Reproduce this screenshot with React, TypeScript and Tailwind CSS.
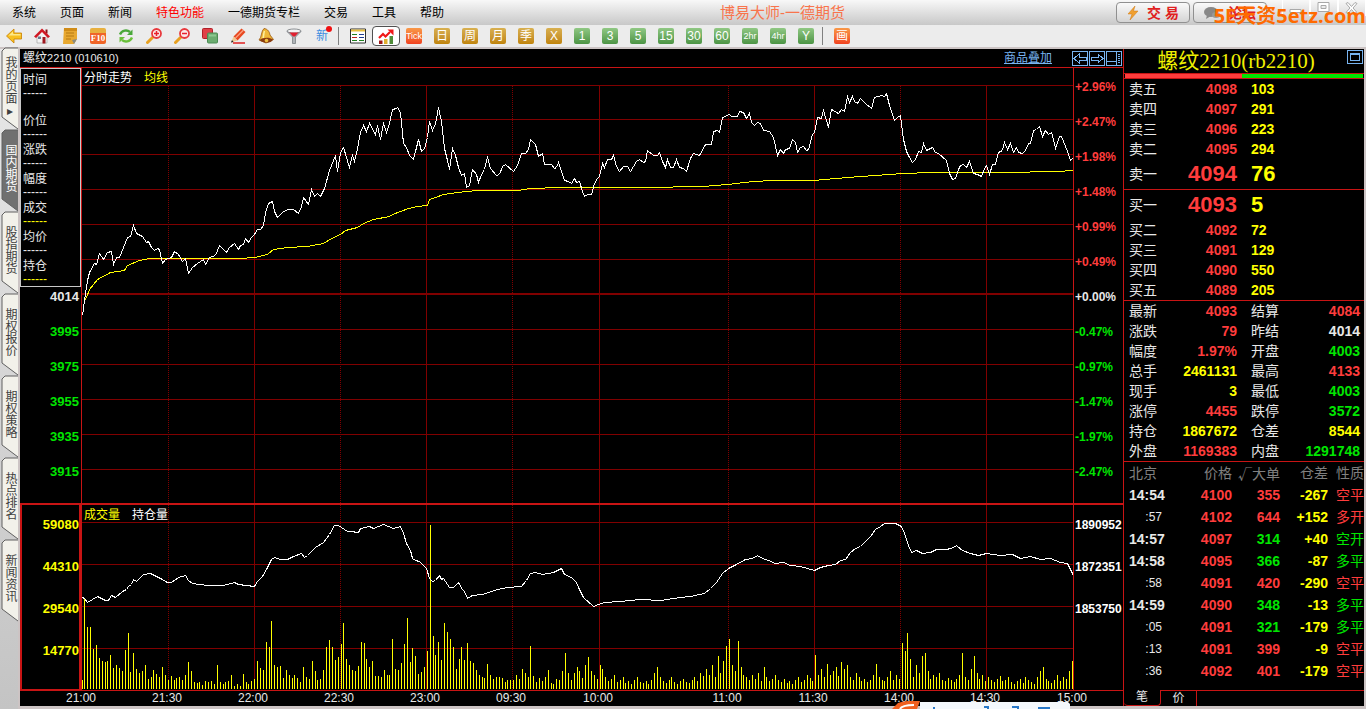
import type { ReactNode } from "react";
import clsx from "clsx";

type Tone = "red" | "green" | "yellow" | "white";

const TONE: Record<Tone, string> = {
  red: "text-[#ff3c3c]",
  green: "text-[#00e600]",
  yellow: "text-[#ffff00]",
  white: "text-[#e8e8e8]",
};

const MENUS = ["系统", "页面", "新闻", "特色功能", "一德期货专栏", "交易", "工具", "帮助"];

const SIDE_TABS = ["我的页面▸", "国内期货", "股指期货", "期权报价", "期权策略", "热点排名", "新闻资讯"];

const PERIODS: { label: string; kind: "gold" | "green" | "orange" }[] = [
  { label: "Tick", kind: "orange" },
  { label: "日", kind: "gold" },
  { label: "周", kind: "gold" },
  { label: "月", kind: "gold" },
  { label: "季", kind: "gold" },
  { label: "X", kind: "gold" },
  { label: "1", kind: "green" },
  { label: "3", kind: "green" },
  { label: "5", kind: "green" },
  { label: "15", kind: "green" },
  { label: "30", kind: "green" },
  { label: "60", kind: "green" },
  { label: "2hr", kind: "green" },
  { label: "4hr", kind: "green" },
  { label: "Y", kind: "green" },
];

const INFO: { label: string; tone: Tone }[] = [
  { label: "价位", tone: "white" },
  { label: "涨跌", tone: "white" },
  { label: "幅度", tone: "white" },
  { label: "成交", tone: "yellow" },
  { label: "均价", tone: "white" },
  { label: "持仓", tone: "yellow" },
];

const PERCENTS: [string, Tone][] = [
  ["+2.96%", "red"],
  ["+2.47%", "red"],
  ["+1.98%", "red"],
  ["+1.48%", "red"],
  ["+0.99%", "red"],
  ["+0.49%", "red"],
  ["+0.00%", "white"],
  ["-0.47%", "green"],
  ["-0.97%", "green"],
  ["-1.47%", "green"],
  ["-1.97%", "green"],
  ["-2.47%", "green"],
];

const SELLS = [
  ["卖五", "4098", "103"],
  ["卖四", "4097", "291"],
  ["卖三", "4096", "223"],
  ["卖二", "4095", "294"],
  ["卖一", "4094", "76"],
];

const BUYS = [
  ["买一", "4093", "5"],
  ["买二", "4092", "72"],
  ["买三", "4091", "129"],
  ["买四", "4090", "550"],
  ["买五", "4089", "205"],
];

const STATS: [string, string, Tone, string, string, Tone][] = [
  ["最新", "4093", "red", "结算", "4084", "red"],
  ["涨跌", "79", "red", "昨结", "4014", "white"],
  ["幅度", "1.97%", "red", "开盘", "4003", "green"],
  ["总手", "2461131", "yellow", "最高", "4133", "red"],
  ["现手", "3", "yellow", "最低", "4003", "green"],
  ["涨停", "4455", "red", "跌停", "3572", "green"],
  ["持仓", "1867672", "yellow", "仓差", "8544", "yellow"],
  ["外盘", "1169383", "red", "内盘", "1291748", "green"],
];

const TRADES: [string, string, string, string, string, Tone][] = [
  ["14:54", "4100", "355", "-267", "空平", "red"],
  [":57", "4102", "644", "+152", "多开", "red"],
  ["14:57", "4097", "314", "+40", "空开", "green"],
  ["14:58", "4095", "366", "-87", "多平", "green"],
  [":58", "4091", "420", "-290", "空平", "red"],
  ["14:59", "4090", "348", "-13", "多平", "green"],
  [":05", "4091", "321", "-179", "多平", "green"],
  [":13", "4091", "399", "-9", "空平", "red"],
  [":36", "4092", "401", "-179", "空平", "red"],
];

// plot units: x runs 82..1073 over the session, y grows downwards
const H_LINES = [85, 119, 154, 189, 224, 259, 329, 364, 399, 434, 469];
const VOL_LINES = [522, 564, 606, 648];
const SOLID = [254, 426, 599, 814, 986];
const DOTTED = [168, 340, 512, 728, 900];

const TIMES = [
  { label: "21:00", x: 82 },
  { label: "21:30", x: 168 },
  { label: "22:00", x: 254 },
  { label: "22:30", x: 340 },
  { label: "23:00", x: 426 },
  { label: "09:30", x: 512 },
  { label: "10:00", x: 599 },
  { label: "11:00", x: 728 },
  { label: "11:30", x: 814 },
  { label: "14:00", x: 900 },
  { label: "14:30", x: 986 },
  { label: "15:00", x: 1073 },
];

const PRICE =
  "82,315 84,300 87,280 89,272 94,263 96,264 99,253 103,259 107,252 111,251 113,264 116,257 119,257 127,237 130,236 133,225 136,233 142,236 146,242 148,241 151,247 154,250 157,248 159,249 162,263 165,259 171,257 174,251 178,254 182,261 185,258 188,273 192,267 197,263 203,259 205,264 209,257 215,255 219,245 226,252 229,247 234,243 238,249 240,245 243,244 245,238 248,242 251,237 254,234 257,229 260,229 263,225 265,212 268,203 272,201 274,211 277,217 282,212 287,209 293,209 298,213 301,206 303,197 308,204 311,189 314,196 317,193 320,196 324,188 329,170 335,155 337,171 340,152 343,147 346,157 349,167 352,155 354,161 357,148 360,132 363,125 366,131 369,123 375,134 377,125 380,139 383,123 386,132 389,123 392,109 396,108 397,107 400,112 403,143 406,147 409,155 413,159 415,151 418,139 421,151 424,148 427,137 429,121 432,130 435,123 437,113 438,107 441,121 444,148 447,160 449,169 452,148 455,155 458,167 461,175 464,173 466,187 469,185 472,169 476,174 478,182 481,174 484,169 487,157 490,168 496,175 499,174 502,166 505,164 513,171 517,165 521,153 525,153 528,149 530,139 535,144 538,156 542,153 544,164 551,164 554,168 556,167 558,162 564,180 568,181 571,183 574,178 576,182 579,181 582,191 584,196 587,194 591,194 594,183 597,178 599,176 602,163 604,167 607,159 611,159 613,155 616,166 619,171 623,166 627,166 630,171 636,161 639,159 643,162 645,161 647,150 653,155 657,155 659,152 662,161 665,167 667,159 670,167 673,167 676,159 679,167 683,168 686,171 690,158 693,153 699,155 705,144 711,144 713,131 717,130 719,132 722,117 729,114 731,116 737,116 739,111 743,112 746,118 749,113 751,122 754,125 757,122 760,123 763,130 769,131 773,137 777,155 780,149 783,153 785,149 789,148 792,139 795,142 797,152 800,147 803,146 806,150 808,149 812,134 814,132 817,117 821,118 823,110 828,127 831,109 838,113 841,109 844,111 847,96 849,102 852,96 854,101 857,103 860,98 865,103 871,108 874,97 881,95 884,96 886,93 889,105 894,120 897,117 900,115 903,139 906,151 909,157 912,162 915,159 918,151 921,152 923,143 926,150 932,147 935,152 938,153 946,160 949,173 952,179 955,178 958,169 960,165 963,164 966,167 969,161 973,173 977,174 981,176 984,168 986,165 989,174 992,164 995,164 998,152 1002,150 1004,142 1007,149 1010,143 1013,152 1016,147 1018,152 1022,153 1025,150 1028,143 1030,143 1033,130 1036,129 1039,126 1042,136 1045,130 1048,134 1051,132 1053,139 1055,148 1059,136 1061,136 1067,151 1070,160 1073,157";

const AVERAGE =
  "84,300 86,297 89,289 93,284 97,279 110,272 124,270 127,265 139,260 149,258 240,258 254,257 267,254 273,249 287,247 307,246 323,243 333,237 340,234 345,230 357,227 363,223 373,219 389,216 392,214 408,208 417,206 427,205 429,199 435,197 443,194 457,192 477,190 517,190 530,188 560,187 643,187 703,186 727,184 753,181 773,180 813,180 847,177 903,173 930,172 1003,172 1057,171 1073,170";

const HOLDING =
  "82,597 84,598 87,602 97,596 105,600 108,600 111,595 115,597 122,591 126,589 128,586 131,584 133,579 136,581 143,574 150,573 160,578 167,582 171,582 178,577 185,575 188,580 192,583 207,585 223,585 234,582 238,584 254,586 257,581 262,576 266,569 271,559 274,557 280,559 287,559 293,556 301,553 304,557 307,555 315,547 323,542 329,534 334,525 338,525 347,531 353,531 355,532 358,532 360,528 369,526 373,528 383,524 388,526 393,528 400,526 403,533 406,543 410,550 412,558 415,560 419,561 426,568 429,578 432,581 435,580 439,575 441,579 443,578 449,587 453,587 458,582 462,589 464,591 467,598 472,595 482,594 497,589 507,587 521,586 526,580 530,573 535,572 542,574 553,572 561,568 564,574 571,577 576,582 578,587 583,597 593,606 598,604 604,602 620,601 640,599 660,600 680,597 690,596 704,593 710,588 716,582 722,573 728,568 736,564 745,559 752,558 757,555 762,558 768,560 775,563 783,562 790,565 800,566 807,568 814,570 820,567 828,565 835,564 840,560 845,559 850,552 855,548 860,546 865,541 870,536 875,529 880,526 884,523 895,523 901,526 904,533 908,545 911,552 916,550 922,553 930,552 936,549 945,549 951,548 956,545 962,550 970,553 978,555 986,553 1000,555 1012,554 1020,558 1030,556 1040,559 1050,558 1060,562 1067,563 1073,575";

// one bar per traded minute
const VOLUMES = [
  9, 91, 62, 62, 40, 44, 31, 28, 27, 28, 34, 21, 24, 21, 18, 39, 56, 17, 36, 20, 16, 18, 24, 10, 12, 19, 15, 12, 22, 14,
  9, 13, 9, 11, 12, 9, 14, 27, 18, 7, 6, 7, 4, 8, 7, 8, 5, 24, 7, 5, 7, 8, 14, 3, 5, 3, 15, 7, 5, 8,
  10, 28, 21, 19, 47, 42, 68, 24, 22, 23, 11, 19, 14, 11, 14, 11, 7, 22, 12, 10, 28, 18, 9, 10, 19, 42, 49, 42, 29, 32,
  45, 66, 30, 24, 19, 18, 23, 47, 46, 30, 22, 28, 13, 13, 12, 19, 14, 14, 50, 20, 19, 26, 45, 71, 27, 41, 33, 15, 17, 22,
  38, 164, 53, 34, 47, 29, 66, 57, 50, 42, 20, 30, 42, 29, 46, 28, 26, 19, 14, 12, 11, 25, 14, 10, 12, 12, 11, 7, 9, 9,
  9, 14, 10, 20, 16, 12, 43, 13, 7, 11, 8, 12, 19, 6, 5, 10, 9, 18, 36, 16, 9, 16, 22, 18, 11, 24, 32, 18, 14, 10,
  24, 20, 12, 8, 10, 14, 7, 9, 12, 6, 8, 5, 9, 12, 7, 6, 8, 5, 9, 16, 22, 12, 8, 6, 9, 12, 7, 5, 8, 10,
  7, 6, 9, 12, 8, 16, 13, 20, 14, 24, 12, 33, 16, 28, 43, 50, 24, 18, 48, 22, 14, 12, 9, 14, 10, 16, 8, 22, 12, 8,
  10, 14, 9, 7, 10, 6, 8, 5, 9, 12, 7, 9, 14, 11, 8, 34, 14, 20, 12, 25, 14, 18, 22, 13, 27, 20, 24, 12, 9, 16,
  12, 8, 10, 7, 9, 14, 25, 12, 9, 8, 12, 18, 9, 14, 10, 46, 38, 56, 30, 12, 24, 16, 33, 36, 18, 10, 14, 12, 16, 9,
  8, 11, 9, 7, 10, 14, 36, 12, 9, 20, 33, 16, 10, 14, 8, 12, 9, 7, 10, 13, 8, 9, 12, 7, 5, 8, 10, 6, 12, 9,
  7, 5, 12, 18, 22, 10, 8, 6, 9, 14, 8, 12, 10, 18, 28,
];

/* ---------- toolbar ---------- */

const ToolButton = ({ label, active, children }: { label: string; active?: boolean; children: ReactNode }) => (
  <button
    type="button"
    aria-label={label}
    className={clsx(
      "flex h-5 w-7 items-center justify-center",
      active && "rounded-sm border border-[#505050] bg-white",
    )}
  >
    {children}
  </button>
);

const Glyph = ({ children }: { children: ReactNode }) => (
  <svg viewBox="0 0 16 16" className="size-4">
    {children}
  </svg>
);

const Magnifier = ({ plus }: { plus?: boolean }) => (
  <Glyph>
    <path d="M1.500 14.500 6.500 9.500" stroke="#e8a020" strokeWidth="3" strokeLinecap="round" />
    <circle cx="10.500" cy="5.500" r="4.500" fill="#fbeaea" stroke="#e8383c" strokeWidth="1.800" />
    <path d={plus ? "M8 5.500h5M10.500 3v5" : "M8 5.500h5"} stroke="#e8202c" strokeWidth="1.500" />
  </Glyph>
);

const TOOLS: { label: string; icon: ReactNode }[] = [
  {
    label: "后退",
    icon: (
      <Glyph>
        <path d="M.5 8 8 1v4h7.500v6H8v4z" fill="#f8c020" stroke="#c88000" strokeWidth=".8" />
        <path d="M2.500 7.500 7 3.500V6h7.500v1.500z" fill="#fde88a" />
      </Glyph>
    ),
  },
  {
    label: "首页",
    icon: (
      <Glyph>
        <path d="M3 8v7h10V8L8 3z" fill="#f4f4f4" stroke="#999" strokeWidth=".6" />
        <path d="M11.500 1.500h2v4h-2z" fill="#8c1018" />
        <path d="M0 8.500 8 .5l8 8-2 1.500-6-6-6 6z" fill="#d01824" />
        <path d="M4 8.500h3V11H4z" fill="#6a7a90" />
        <path d="M8.500 9h3v6.500h-3z" fill="#a01820" />
      </Glyph>
    ),
  },
  {
    label: "公告",
    icon: (
      <Glyph>
        <path d="M2 0h13v11l-3 5H1z" fill="#e8a830" />
        <path d="M2 0h13v3H2z" fill="#d08c18" />
        <path d="M4 5h8M4 8h8M4 11h5" stroke="#b07410" strokeWidth=".9" />
        <path d="m15 11-3 5-2-4z" fill="#8a8a80" />
      </Glyph>
    ),
  },
  {
    label: "F10",
    icon: (
      <span className="flex h-4 w-4 items-center justify-center rounded-xs bg-linear-to-b from-[#e8b040] from-30% to-[#f06428] to-30% pt-1 font-[Liberation_Serif] text-[9px] font-bold leading-none text-white">
        F10
      </span>
    ),
  },
  {
    label: "刷新",
    icon: (
      <Glyph>
        <path d="M2 6.500C4 2 9 1.500 12 4" fill="none" stroke="#4aa83a" strokeWidth="2.400" />
        <path d="M14.500 1.500v5.500H9z" fill="#4aa83a" />
        <path d="M14 9.500c-2 4.500-7 5-10 2.500" fill="none" stroke="#6abf3a" strokeWidth="2.400" />
        <path d="M1.500 14.500V9H7z" fill="#6abf3a" />
      </Glyph>
    ),
  },
  { label: "放大", icon: <Magnifier plus /> },
  { label: "缩小", icon: <Magnifier /> },
  {
    label: "叠加",
    icon: (
      <Glyph>
        <rect x=".5" y=".5" width="10" height="10" rx="1" fill="#e04048" stroke="#b02028" />
        <rect x="5.500" y="5" width="10" height="10" rx="1" fill="#6cac70" stroke="#4c8c54" />
        <path d="M7 6.500h7v2H7z" fill="#8cc890" />
      </Glyph>
    ),
  },
  {
    label: "画线",
    icon: (
      <Glyph>
        <path d="m3.500 8.500 8-8L15.500 4l-8 8.500z" fill="#e84820" />
        <path d="m5.500 10 8-8" stroke="#f8a080" strokeWidth="1.200" />
        <path d="m3.500 8.500 4 4L1 14.500z" fill="#f0c890" />
        <path d="m1 14.500 1-2.500 1.500 2z" fill="#222" />
        <path d="M3 15h12" stroke="#e02020" strokeWidth="1.500" />
      </Glyph>
    ),
  },
  {
    label: "预警",
    icon: (
      <Glyph>
        <path d="M6 .5c4 .5 5.500 3.500 6 6.500l3.500 4.500L8 15l-7-3C4 9 3 3 6 .5z" fill="#f0b838" stroke="#9a5810" strokeWidth=".8" />
        <path d="M6.500 3C5.500 5 6 8 5 10" fill="none" stroke="#fdf0a0" strokeWidth="1.500" />
        <path d="M1.500 12C5 9.500 11 9 15 11.500 13 16 5 15.500 1.500 12z" fill="#8a3c10" />
        <circle cx="8.500" cy="12.500" r="1.800" fill="#f0c040" />
      </Glyph>
    ),
  },
  {
    label: "筛选",
    icon: (
      <Glyph>
        <path d="M1 3.500 6.500 9v6.500h3V9L15 3.500z" fill="#b0b4b8" stroke="#70757a" strokeWidth=".7" />
        <ellipse cx="8" cy="3" rx="7" ry="2" fill="#f4f4f4" stroke="#70757a" strokeWidth=".8" />
        <path d="M3.500 4.500h9L9 8.500H7z" fill="#e02030" />
      </Glyph>
    ),
  },
];

const PeriodBadge = ({ label, kind }: { label: string; kind: "gold" | "green" | "orange" }) => (
  <span
    className={clsx(
      "flex size-4 items-center justify-center overflow-hidden rounded-xs leading-none text-white",
      kind === "gold" && "bg-linear-to-b from-[#d8b050] to-[#c08408]",
      kind === "green" && "bg-linear-to-b from-[#90c884] to-[#4c9444]",
      kind === "orange" && "bg-linear-to-b from-[#f89848] to-[#f04020]",
      label.length > 2 ? "text-[9px]" : "text-xs",
    )}
  >
    {label}
  </span>
);

const Toolbar = () => (
  <div className="flex h-6 items-center border-b-2 border-[#ccc4c4] bg-[#ececec]">
    {TOOLS.map((t) => (
      <ToolButton key={t.label} label={t.label}>
        {t.icon}
      </ToolButton>
    ))}
    <ToolButton label="新品种">
      <span className="relative text-xs leading-none text-[#3c8ce0]">
        新
        <i className="absolute -right-1 -top-1 size-1.5 rounded-full bg-[#f01010]" />
      </span>
    </ToolButton>
    <div className="flex w-2 justify-start pl-0.5">
      <div className="h-[18px] w-px bg-[#808080]" />
    </div>
    <ToolButton label="报价表">
      <Glyph>
        <path d="M.5 1h15v14H.5z" fill="#fff" stroke="#303030" />
        <path d="M1 1.500h14v2H1z" fill="#e8c040" />
        <path d="M2 6.500h5M2 12.500h5M9 12.500h5" stroke="#208020" />
        <path d="M2 9.500h5" stroke="#c02020" />
        <path d="M9 6.500h5M9 9.500h5" stroke="#203c90" />
      </Glyph>
    </ToolButton>
    <ToolButton label="分时图" active>
      <Glyph>
        <path d="M1 12.500h3.500V16H1z" fill="#a01818" />
        <path d="M6 11h3.500v5H6z" fill="#e0b030" />
        <path d="M11.500 8H15v8h-3.500z" fill="#508c38" />
        <path d="m1 10 4-4 2.500 2.500L12 4" fill="none" stroke="#f01818" strokeWidth="2.200" />
        <path d="M9.500 1.500h6v6z" fill="#f01818" />
      </Glyph>
    </ToolButton>
    {PERIODS.map((p) => (
      <ToolButton key={p.label} label={p.label}>
        <PeriodBadge {...p} />
      </ToolButton>
    ))}
    <div className="flex w-2 justify-start pl-0.5">
      <div className="h-[18px] w-px bg-[#808080]" />
    </div>
    <ToolButton label="画">
      <PeriodBadge label="画" kind="orange" />
    </ToolButton>
  </div>
);

/* ---------- title bar ---------- */

const HeaderButton = ({ icon, children }: { icon: ReactNode; children: ReactNode }) => (
  <button
    type="button"
    className="flex h-[21px] w-[74px] items-center justify-center gap-2 rounded-sm border border-[#909090] bg-linear-to-b from-[#fafafa] to-[#d4d4d4] text-sm font-bold leading-none text-[#e02020]"
  >
    {icon}
    {children}
  </button>
);

const TitleBar = () => (
  <header className="relative flex h-[25px] items-center justify-between bg-linear-to-b from-[#f8f8f8] to-[#c8c8c8]">
    <nav className="flex">
      {MENUS.map((m) => (
        <button
          key={m}
          type="button"
          className={clsx("px-3 text-xs leading-6", m === "特色功能" ? "text-[#ff0000]" : "text-black")}
        >
          {m}
        </button>
      ))}
    </nav>
    <div className="flex h-full items-start gap-[3px] pt-0.5">
      <HeaderButton
        icon={
          <svg viewBox="0 0 12 14" className="h-3.5 w-3">
            <path d="M8 0 1 8h4l-2 6 8-9H6.500z" fill="#f0a030" stroke="#d07810" strokeWidth=".5" />
          </svg>
        }
      >
        <span>交 易</span>
      </HeaderButton>
      <HeaderButton
        icon={
          <svg viewBox="0 0 16 14" className="h-3.5 w-4">
            <ellipse cx="7" cy="6" rx="7" ry="5" fill="#888" />
            <path d="m3 9-1 4 5-3z" fill="#888" />
            <ellipse cx="12" cy="9" rx="4" ry="3" fill="#999" />
          </svg>
        }
      >
        <span>论坛</span>
      </HeaderButton>
      <div className="ml-3 flex">
        {["M2 8h11v3H2z", "M2 1h11v9H2zM5 4h5v3H5z", "m2 2 2-1 3.500 4L11 1l2 1-4 4.500L13 11l-2 1-3.500-4L4 12l-2-1 4-4.500z"].map((d) => (
          <button
            key={d}
            type="button"
            aria-label="窗口"
            className="-mt-0.5 flex h-4 w-7 items-center justify-center border-x border-white"
          >
            <svg viewBox="0 0 16 13" className="h-3.5 w-4">
              <path d={d} fill="#fff" stroke="#a8a8a8" fillRule="evenodd" />
            </svg>
          </button>
        ))}
      </div>
    </div>
    <h1 className="absolute left-[720px] top-0 text-[15px] leading-[26px] text-[#f8744c]">博易大师-一德期货</h1>
    <div className="absolute right-0 top-0 whitespace-nowrap font-['Open_Sans','Noto_Sans_CJK_SC',sans-serif] text-[20px] font-bold leading-8 text-[#ff6a00]">
      5E天资5etz.com
    </div>
  </header>
);

/* ---------- left rail ---------- */

const SideTabs = () => (
  <aside className="flex w-5 shrink-0 flex-col border-r-2 border-[#ccc4c4] bg-linear-to-b from-[#e8e8e8] to-[#c4c4c4]">
    {SIDE_TABS.map((tab, i) => (
      <button key={tab} type="button" className="relative -mt-px flex h-[83px] w-[18px] items-start pl-0.5">
        <svg viewBox="0 0 18 83" className="absolute inset-0 h-full w-full overflow-visible">
          <path d="M18 0H5L2 3v66l16 12" fill={i === 1 ? "#707070" : "#f2f1ea"} stroke="#606060" />
        </svg>
        <span
          className={clsx(
            "relative text-xs leading-4 [writing-mode:vertical-rl]",
            i === 0 ? "pt-2" : "pt-3.5",
            i === 1 ? "text-white" : "text-[#404040]",
          )}
        >
          {tab}
        </span>
      </button>
    ))}
  </aside>
);

/* ---------- charts ---------- */

const Verticals = ({ top, bottom }: { top: number; bottom: number }) => (
  <g>
    {SOLID.map((x) => (
      <rect key={x} x={x} y={top} width={1} height={bottom - top} fill="#800000" />
    ))}
    {DOTTED.map((x) => (
      <path
        key={x}
        d={`M${x + 0.5} ${top}V${bottom}`}
        stroke="#800000"
        strokeDasharray="1 1"
        shapeRendering="geometricPrecision"
      />
    ))}
  </g>
);

const PriceChart = () => (
  <svg
    viewBox="82 68 991 435"
    preserveAspectRatio="none"
    shapeRendering="crispEdges"
    className="absolute inset-0 h-full w-full"
  >
    {H_LINES.map((y) => (
      <rect key={y} x={82} y={y} width={991} height={1} fill="#800000" />
    ))}
    <rect x={82} y={293} width={991} height={2} fill="#800000" />
    <Verticals top={86} bottom={503} />
    <g fill="none" transform="translate(.5 .5)">
      <polyline points={AVERAGE} stroke="#ffff00" />
      <polyline points={PRICE} stroke="#ffffff" />
    </g>
  </svg>
);

const VolumeChart = () => (
  <svg
    viewBox="82 505 991 185"
    preserveAspectRatio="none"
    shapeRendering="crispEdges"
    className="absolute inset-0 h-full w-full"
  >
    {VOL_LINES.map((y) => (
      <rect key={y} x={82} y={y} width={991} height={1} fill="#800000" />
    ))}
    <Verticals top={505} bottom={690} />
    {VOLUMES.map((v, i) => (
      <rect key={i} x={82 + Math.floor((i * 990) / 344)} y={689 - v} width={1} height={v} fill="#ffff00" />
    ))}
    <polyline points={HOLDING} fill="none" stroke="#ffffff" transform="translate(.5 .5)" />
  </svg>
);

const Dashes = ({ tone }: { tone: Tone }) => (
  <span className={clsx("block text-xs leading-[11px]", TONE[tone])}>------</span>
);

const PricePane = () => (
  <section className="flex h-[435px]">
    <div className="flex w-[61px] flex-col">
      <dl className="border border-[#c8c8c8] pl-0.5 text-xs text-[#e8e8e8]">
        <div className="h-[41px] pt-[3px]">
          <dt className="leading-4">时间</dt>
          <dd>
            <Dashes tone="white" />
          </dd>
        </div>
        {INFO.map((row) => (
          <div key={row.label} className="h-[29px] pt-[3px]">
            <dt className="leading-4">{row.label}</dt>
            <dd>
              <Dashes tone={row.tone} />
            </dd>
          </div>
        ))}
        <div className="h-0.5" />
      </dl>
      <div className="-mt-2 pr-0.5 text-right text-[13px] font-bold leading-[35px]">
        <div className={TONE.white}>4014</div>
        {["3995", "3975", "3955", "3935", "3915"].map((p) => (
          <div key={p} className={TONE.green}>
            {p}
          </div>
        ))}
      </div>
    </div>
    <div className="relative flex-1 border-x border-[#c81414]">
      <PriceChart />
      <div className="relative flex gap-3 pl-0.5 pt-px text-xs leading-[18px]">
        <span className="text-white">分时走势</span>
        <span className={TONE.yellow}>均线</span>
      </div>
    </div>
    <div className="w-[49px] pl-px pt-0.5 text-xs font-bold leading-[35px]">
      {PERCENTS.map(([label, tone]) => (
        <div key={label} className={TONE[tone]}>
          {label}
        </div>
      ))}
    </div>
  </section>
);

const VolumePane = () => (
  <section className="flex h-[188px] border-b border-t-2 border-[#c81414]">
    <div className="w-[61px] border-x-2 border-b border-[#c81414] text-right text-[13px] font-bold leading-[42px] text-[#ffff00]">
      <div className="-mt-px">
        {["59080", "44310", "29540", "14770"].map((v) => (
          <div key={v}>{v}</div>
        ))}
      </div>
    </div>
    <div className="relative flex-1 border-x border-[#c81414]">
      <VolumeChart />
      <div className="relative flex gap-3 pl-0.5 pt-px text-xs leading-[18px]">
        <span className={TONE.yellow}>成交量</span>
        <span className="text-white">持仓量</span>
      </div>
    </div>
    <div className="w-[49px] pl-px text-xs font-bold leading-[42px] text-white">
      <div className="-mt-px">
        {["1890952", "1872351", "1853750"].map((v) => (
          <div key={v}>{v}</div>
        ))}
      </div>
    </div>
  </section>
);

const TimeAxis = () => (
  <div className="flex h-[15px] pl-[62px] pr-[50px]">
    <div className="relative flex-1 text-xs leading-[15px] text-[#e8e8e8]">
      {TIMES.map((t) => (
        <span
          key={t.label}
          className="absolute -translate-x-1/2"
          style={{ left: `${((t.x - 83) / 991) * 100}%` }}
        >
          {t.label}
        </span>
      ))}
    </div>
  </div>
);

const FrameIcon = ({ d }: { d: string }) => (
  <button type="button" aria-label="布局" className="flex h-[15px] w-4 border border-[#78b4f0]">
    <svg viewBox="0 0 14 13" shapeRendering="crispEdges" className="h-full w-full">
      <path d={d} fill="none" stroke="#78b4f0" />
    </svg>
  </button>
);

const ChartPanel = () => (
  <main className="flex min-w-0 flex-1 flex-col bg-black">
    <div className="flex h-[19px] items-center justify-between border-b border-[#c81414] pl-[3px] pr-px">
      <h2 className="flex text-xs text-[#e8e8e8]">
        螺纹<span className="text-[11px] leading-4">2210 (010610)</span>
      </h2>
      <div className="flex items-center gap-px">
        <a href="#overlay" className="mr-[19px] text-xs text-[#78b4f0] underline">
          商品叠加
        </a>
        <FrameIcon d="M1 6.500 6 2v3h7v3H6v3z" />
        <FrameIcon d="M13 6.500 8 2v3H1v3h7v3z" />
        <FrameIcon d="M0 9.500h9M9.500 0v13M11 2.500h2M11 4.500h2M11 6.500h2M11 8.500h2M11 10.500h2" />
      </div>
    </div>
    <PricePane />
    <VolumePane />
    <TimeAxis />
  </main>
);

/* ---------- quote panel ---------- */

const DepthRow = ({ row, big }: { row: string[]; big: boolean }) => (
  <tr className={big ? "h-[30px]" : "h-5"}>
    <th scope="row" className="w-[46px] p-0 pl-[5px] text-left font-normal text-[#e8e8e8]">
      {row[0]}
    </th>
    <td className={clsx("w-[67px] p-0 text-right font-bold", TONE.red, big && "text-[22px]")}>{row[1]}</td>
    <td className={clsx("p-0 pl-3.5 font-bold", TONE.yellow, big && "text-[22px]")}>{row[2]}</td>
  </tr>
);

const QuotePanel = () => (
  <aside className="flex w-[241px] shrink-0 flex-col border-l border-[#c81414] bg-black text-sm leading-5">
    <div className="relative h-6">
      <h2 className="pr-4 text-center font-['Liberation_Serif','Noto_Sans_CJK_SC',serif] text-[21px] leading-6 text-[#f0f000]">
        螺纹2210(rb2210)
      </h2>
      <button type="button" aria-label="最大化" className="absolute right-px top-px h-3.5 w-4 border border-[#78b4f0] p-0.5">
        <span className="block h-full border border-t-2 border-[#78b4f0]" />
      </button>
    </div>
    <div className="flex h-1.5 border-y border-[#c81414] px-px">
      <div className="w-[49%] bg-[#ff3c3c]" />
      <div className="flex-1 bg-[#00e600]" />
    </div>

    <table className="w-full table-fixed border-collapse leading-5">
      <tbody>
        {SELLS.map((r, i) => (
          <DepthRow key={r[0]} row={r} big={i === 4} />
        ))}
      </tbody>
    </table>
    <div className="h-px bg-[#c81414]" />
    <table className="w-full table-fixed border-collapse leading-5">
      <tbody>
        {BUYS.map((r, i) => (
          <DepthRow key={r[0]} row={r} big={i === 0} />
        ))}
      </tbody>
    </table>
    <div className="h-px bg-[#c81414]" />

    <table className="w-full table-fixed border-collapse leading-5">
      <tbody>
        {STATS.map(([l1, v1, t1, l2, v2, t2]) => (
          <tr key={l1} className="h-5 text-[#e8e8e8]">
            <th scope="row" className="w-[46px] p-0 pl-[5px] text-left font-normal">
              {l1}
            </th>
            <td className={clsx("w-[67px] p-0 text-right font-bold", TONE[t1])}>{v1}</td>
            <th scope="row" className="w-[54px] p-0 pl-3.5 text-left font-normal">
              {l2}
            </th>
            <td className={clsx("p-0 pr-1 text-right font-bold", TONE[t2])}>{v2}</td>
          </tr>
        ))}
      </tbody>
    </table>
    <div className="h-px bg-[#c81414]" />

    <table className="w-full table-fixed border-collapse text-right leading-[22px]">
      <thead>
        <tr className="h-[22px] text-[#808080]">
          <th className="w-[60px] p-0 pl-[5px] text-left font-normal">北京</th>
          <th className="w-12 p-0 font-normal">价格</th>
          <th className="w-12 whitespace-nowrap p-0 font-['Noto_Sans_CJK_SC',sans-serif] font-normal">√大单</th>
          <th className="w-12 p-0 font-normal">仓差</th>
          <th className="p-0 font-normal">性质</th>
        </tr>
      </thead>
      <tbody>
        {TRADES.map(([time, price, size, diff, kind, tone], i) => (
          <tr key={i} className="h-[22px] font-bold">
            <td
              className={clsx(
                "p-0 text-[#e8e8e8]",
                time.length === 5 ? "pl-[5px] text-left" : "pr-[22px] text-xs font-normal leading-[22px]",
              )}
            >
              {time}
            </td>
            <td className={clsx("p-0", TONE.red)}>{price}</td>
            <td className={clsx("p-0", TONE[tone])}>{size}</td>
            <td className={clsx("p-0", TONE.yellow)}>{diff}</td>
            <td className={clsx("p-0 font-normal", TONE[tone])}>{kind}</td>
          </tr>
        ))}
      </tbody>
    </table>

    <div className="mt-auto flex h-4 text-xs leading-[15px] text-[#e8e8e8]">
      <button type="button" className="w-[37px] rounded-b-sm border-b border-r border-[#c81414]">
        笔
      </button>
      <button type="button" className="w-9 border-r border-t border-[#c81414]">
        价
      </button>
      <div className="flex-1 border-t border-[#c81414]" />
    </div>
  </aside>
);

const InputMethodBar = () => (
  <div className="absolute bottom-0 left-[892px] flex h-2 items-end overflow-hidden">
    <svg viewBox="0 0 28 8" className="h-2 w-7">
      <path d="M0 8 6 2Q14-1 28 0l-3 8z" fill="#f06020" />
      <path d="M8 8q2-4 14-4" fill="none" stroke="#fff" strokeWidth="2" />
    </svg>
    <svg viewBox="0 0 150 7" className="h-[7px] w-[150px]">
      <path d="M0 0h148l2 2v5H0z" fill="#f4f8fc" />
      <path d="M14 5v2M64 5h4v2M92 5h6v2M118 6h12" stroke="#2878c8" strokeWidth="2" fill="none" />
    </svg>
  </div>
);

export default function App() {
  return (
    <div className="relative flex min-h-screen flex-col overflow-hidden bg-[#ccc4c4] font-['Liberation_Sans','Noto_Sans_CJK_SC',sans-serif]">
      <TitleBar />
      <Toolbar />
      <div className="flex flex-1">
        <SideTabs />
        <div className="flex min-w-0 flex-1 border-b-[3px] border-r-2 border-[#ccc4c4]">
          <ChartPanel />
          <QuotePanel />
        </div>
      </div>
      <InputMethodBar />
    </div>
  );
}
